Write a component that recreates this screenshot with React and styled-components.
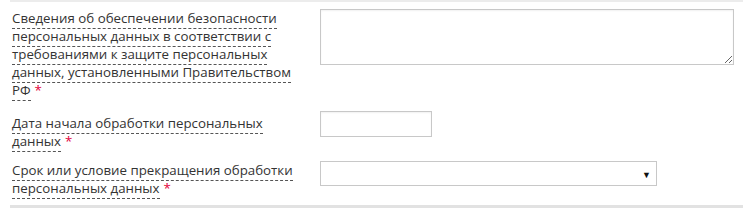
import styled, { createGlobalStyle } from 'styled-components';

const GlobalStyle = createGlobalStyle`
  html, body {
    margin: 0;
    padding: 0;
    background: #fff;
  }
  body {
    font-family: "Open Sans", "Noto Sans", sans-serif;
    font-size: 13.3px;
    color: #333;
  }
`;

const Form = styled.div`
  width: 733px;
  margin-left: 10px;
  border-top: 2px solid #ececec;
  border-bottom: 3px solid #e2e2e2;
  padding-top: 7px;
  box-sizing: border-box;
`;

const Row = styled.div`
  display: flex;
  align-items: flex-start;
  padding-left: 2px;
  margin-bottom: ${(p) => p.$gap}px;
`;

const LabelCol = styled.div`
  width: 308px;
  padding-right: 12px;
  box-sizing: border-box;
  flex-shrink: 0;
  line-height: 18px;
  padding-top: ${(p) => p.$offset || 0}px;
`;

const LabelText = styled.span`
  border-bottom: 1px dashed #555;
  padding-bottom: 1px;
`;

const Required = styled.span`
  color: #e3003b;
  margin-left: 4px;
`;

const FieldCol = styled.div`
  flex: 1;
  display: flex;
`;

const TextArea = styled.textarea`
  width: 414px;
  height: 56px;
  box-sizing: border-box;
  border: 1px solid #c8c8c8;
  box-shadow: inset 0 1px 2px rgba(0, 0, 0, 0.06);
  font-family: inherit;
  font-size: 13px;
  margin: 0;
  padding: 4px;
  outline: none;
`;

const TextInput = styled.input`
  width: 112px;
  height: 26px;
  box-sizing: border-box;
  border: 1px solid #c8c8c8;
  box-shadow: inset 0 1px 2px rgba(0, 0, 0, 0.06);
  font-family: inherit;
  font-size: 13px;
  margin: 0;
  padding: 2px 4px;
  outline: none;
`;

const SelectWrap = styled.div`
  position: relative;
  width: 337px;
  height: 25px;
`;

const Select = styled.select`
  appearance: none;
  width: 100%;
  height: 100%;
  box-sizing: border-box;
  border: 1px solid #c8c8c8;
  background: #fff;
  font-family: inherit;
  font-size: 13px;
  margin: 0;
  padding: 2px 4px;
  outline: none;
`;

const Arrow = styled.span`
  position: absolute;
  right: 6px;
  top: 50%;
  transform: translateY(-50%);
  font-size: 9px;
  color: #111;
  pointer-events: none;
`;

const Field = ({ children }) => <FieldCol>{children}</FieldCol>;

const Label = ({ lines, offset }) => (
  <LabelCol $offset={offset}>
    <LabelText>{lines}</LabelText>
    <Required>*</Required>
  </LabelCol>
);

export default function App() {
  return (
    <>
      <GlobalStyle />
      <Form>
        <Row $gap={12}>
          <Label lines="Сведения об обеспечении безопасности персональных данных в соответствии с требованиями к защите персональных данных, установленными Правительством РФ" />
          <Field>
            <TextArea />
          </Field>
        </Row>
        <Row $gap={11}>
          <Label offset={3} lines="Дата начала обработки персональных данных" />
          <Field>
            <TextInput type="text" />
          </Field>
        </Row>
        <Row $gap={8}>
          <Label lines="Срок или условие прекращения обработки персональных данных" />
          <Field>
            <SelectWrap>
              <Select>
                <option></option>
              </Select>
              <Arrow>▼</Arrow>
            </SelectWrap>
          </Field>
        </Row>
      </Form>
    </>
  );
}
